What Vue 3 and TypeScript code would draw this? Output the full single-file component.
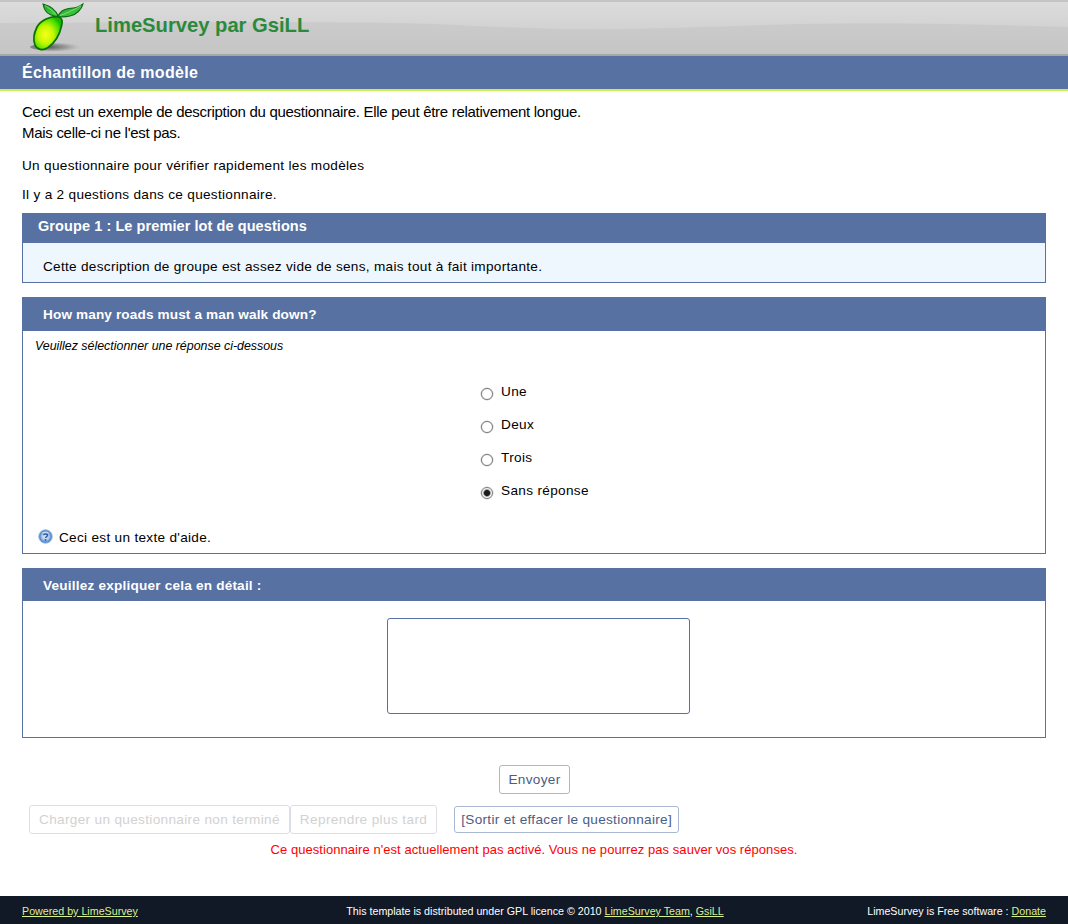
<script setup lang="ts">
const answers: { label: string; checked: boolean }[] = [
  { label: 'Une', checked: false },
  { label: 'Deux', checked: false },
  { label: 'Trois', checked: false },
  { label: 'Sans réponse', checked: true },
]
</script>

<template>
  <div class="page">
    <header class="top">
      <svg class="wave" width="1068" height="52" viewBox="0 0 1068 52" preserveAspectRatio="none">
        <defs>
          <linearGradient id="band" x1="0" y1="0" x2="0" y2="1">
            <stop offset="0" stop-color="#dcdcdc" />
            <stop offset="1" stop-color="#d2d2d2" />
          </linearGradient>
        </defs>
        <path d="M0 0H1068V25C1000 23 900 20 800 22C720 24 650 28 570 27C500 26 450 22 400 21C300 20 150 20 0 21Z" fill="url(#band)" />
      </svg>
      <svg class="logo" width="60" height="54" viewBox="0 0 60 54">
        <defs>
          <radialGradient id="fruit" cx="0.42" cy="0.55" r="0.6">
            <stop offset="0" stop-color="#f8ff1c" />
            <stop offset="0.45" stop-color="#c4f800" />
            <stop offset="0.85" stop-color="#44dc00" />
            <stop offset="1" stop-color="#1cb800" />
          </radialGradient>
          <radialGradient id="shadow" cx="0.3" cy="0.5" r="0.68">
            <stop offset="0" stop-color="#4a4a4a" />
            <stop offset="0.6" stop-color="#8a8a8a" stop-opacity="0.7" />
            <stop offset="1" stop-color="#aaa" stop-opacity="0" />
          </radialGradient>
          <linearGradient id="leaf" x1="0" y1="0" x2="1" y2="1">
            <stop offset="0" stop-color="#18a520" />
            <stop offset="1" stop-color="#4fd048" />
          </linearGradient>
          <radialGradient id="hb" cx="0.5" cy="0.5" r="0.5">
            <stop offset="0" stop-color="#eef4fc" />
            <stop offset="0.55" stop-color="#a9c4ea" />
            <stop offset="0.85" stop-color="#4f86cf" />
            <stop offset="1" stop-color="#6f9ed8" />
          </radialGradient>
        </defs>
        <ellipse cx="30" cy="47" rx="26" ry="4" fill="url(#shadow)" />
        <path d="M33 17C36 18 36.5 22 35.5 26C34 33 30 42 22 47.5C17 51 11 50 9 45C7 40 8 33 11 27C14 21 25 15 33 17Z" fill="url(#fruit)" stroke="#067000" stroke-width="1.7" />
        <path d="M32 16C30 10 24 6 17 4C18 9 20 13 24 14.5C27 16 30 16.5 32 16Z" fill="url(#leaf)" stroke="#0a6a12" stroke-width="1.1" />
        <path d="M32 16.5C34 10 42 8 47 8C50 8 54 6 57 4C56 9 50 15 44 16C39 17 35 17 32 16.5Z" fill="url(#leaf)" stroke="#0a6a12" stroke-width="1.1" />
        <path d="M34 15.5C41 13 48 10 55 5.5M30 14.5C27 11 23 8 19 5.5" fill="none" stroke="#a8eb98" stroke-width="0.7" />
      </svg>
      <span class="brand">LimeSurvey par GsiLL</span>
    </header>

    <h1 class="survey-title">Échantillon de modèle</h1>

    <main class="content">
      <p class="lead">Ceci est un exemple de description du questionnaire. Elle peut être relativement longue.<br />Mais celle-ci ne l'est pas.</p>
      <p class="welcome">Un questionnaire pour vérifier rapidement les modèles</p>
      <p class="count">Il y a 2 questions dans ce questionnaire.</p>

      <section class="group">
        <h2 class="group-title">Groupe 1 : Le premier lot de questions</h2>
        <p class="group-desc">Cette description de groupe est assez vide de sens, mais tout à fait importante.</p>
      </section>

      <section class="question q1">
        <h3 class="q-title q-title-1">How many roads must a man walk down?</h3>
        <p class="hint">Veuillez sélectionner une réponse ci-dessous</p>
        <ul class="answers">
          <li v-for="a in answers" :key="a.label" class="answer">
            <input type="radio" name="q1" :checked="a.checked" />
            <label>{{ a.label }}</label>
          </li>
        </ul>
        <p class="help">
          <svg width="15" height="15" viewBox="0 0 15 15">
            <circle cx="7.5" cy="7.5" r="6.8" fill="url(#hb)" stroke="#8fb2de" stroke-width="0.8" />
            <path d="M3.2 4.6C4.6 2.2 10.4 2.2 11.8 4.6C9.8 3.6 5.2 3.6 3.2 4.6Z" fill="#fff" fill-opacity="0.6" />
            <path d="M5.5 6.2C5.7 4.5 9.5 4.4 9.5 6.3C9.5 7.7 7.5 7.6 7.5 9.1" fill="none" stroke="#2f5c9c" stroke-width="1.5" />
            <circle cx="7.5" cy="11" r="0.95" fill="#2f5c9c" />
          </svg>
          <span>Ceci est un texte d'aide.</span>
        </p>
      </section>

      <section class="question q2">
        <h3 class="q-title q-title-2">Veuillez expliquer cela en détail :</h3>
        <div class="area-wrap"><textarea class="area"></textarea></div>
      </section>

      <div class="submit-row"><button class="btn send">Envoyer</button></div>
      <div class="actions">
        <button class="btn off" disabled>Charger un questionnaire non terminé</button>
        <button class="btn off later" disabled>Reprendre plus tard</button>
        <button class="btn clear">[Sortir et effacer le questionnaire]</button>
      </div>
      <p class="warning">Ce questionnaire n'est actuellement pas activé. Vous ne pourrez pas sauver vos réponses.</p>
    </main>

    <footer class="foot">
      <div class="foot-left"><a href="#">Powered by LimeSurvey</a></div>
      <div class="foot-mid">This template is distributed under GPL licence © 2010 <a href="#">LimeSurvey Team</a>, <a href="#">GsiLL</a></div>
      <div class="foot-right">LimeSurvey is Free software : <a href="#">Donate</a></div>
    </footer>
  </div>
</template>

<style>
body { margin: 0; background: #fff; }
</style>

<style scoped>
.page {
  width: 1068px;
  height: 924px;
  display: flex;
  flex-direction: column;
  font-family: "Liberation Sans", Arial, sans-serif;
  color: #000;
  overflow: hidden;
}
.top {
  position: relative;
  box-sizing: border-box;
  height: 56px;
  border-top: 2px solid #c4c4c4;
  border-bottom: 2px solid #a6a6a6;
  background: linear-gradient(180deg, #cfcfcf, #c5c5c5);
  display: flex;
  align-items: center;
  padding-left: 26px;
}
.wave { position: absolute; left: 0; top: 0; }
.logo { position: relative; flex: none; margin-top: -2px; }
.brand {
  position: relative;
  margin-left: 9px;
  margin-top: -5px;
  font-size: 20.2px;
  font-weight: 700;
  color: #2b8a3a;
}
.survey-title {
  margin: 0;
  box-sizing: border-box;
  height: 35px;
  background: #5671a2;
  border-bottom: 2px solid #c8f050;
  color: #fff;
  font-size: 16px;
  font-weight: 700;
  line-height: 33px;
  padding-left: 22px;
  letter-spacing: 0.3px;
}
.content {
  flex: 1;
  padding: 0 22px;
  display: flex;
  flex-direction: column;
}
.lead {
  margin: 10px 0 0;
  font-size: 15px;
  line-height: 21px;
  letter-spacing: -0.29px;
}
.welcome, .count {
  margin: 0;
  font-size: 13.6px;
  line-height: 16px;
  letter-spacing: 0.3px;
}
.welcome { margin-top: 15px; }
.count { margin-top: 13px; }
.group {
  margin-top: 10px;
  box-sizing: border-box;
  height: 70px;
  border: 1px solid #5671a2;
  background: #eef6fe;
}
.group-title {
  margin: 0;
  height: 29px;
  background: #5671a2;
  color: #fff;
  font-size: 14.5px;
  font-weight: 700;
  line-height: 24px;
  padding-left: 15px;
  letter-spacing: 0.08px;
}
.group-desc {
  margin: 16px 0 0 20px;
  font-size: 13.6px;
  line-height: 16px;
  letter-spacing: 0.29px;
}
.question {
  box-sizing: border-box;
  border: 1px solid #5671a2;
  margin-top: 14px;
  display: flex;
  flex-direction: column;
}
.q1 { height: 257px; }
.q2 { height: 170px; }
.q-title {
  margin: 0;
  background: #5671a2;
  color: #fff;
  font-size: 13.6px;
  font-weight: 700;
  padding-left: 20px;
}
.q-title-1 { height: 33px; line-height: 33px; letter-spacing: 0.13px; }
.q-title-2 { height: 32px; line-height: 34px; letter-spacing: 0.2px; }
.hint {
  margin: 7px 0 0 12px;
  font-size: 12.4px;
  line-height: 16px;
  font-style: italic;
}
.answers {
  list-style: none;
  margin: 27px 0 0 458px;
  padding: 0;
}
.answer {
  height: 33px;
  display: flex;
  align-items: flex-start;
  font-size: 13.6px;
  letter-spacing: 0.33px;
}
.answer input {
  appearance: none;
  box-sizing: border-box;
  width: 12px;
  height: 12px;
  margin: 7px 8px 0 0;
  border: 1px solid #7b7b7b;
  border-radius: 50%;
  background: #fff;
  box-shadow: 0 0 0 0.5px #c8c8c8;
}
.answer input:checked {
  background: radial-gradient(circle, #1c1c1c 0, #1c1c1c 2.6px, #8a8a8a 3.3px, #f8f8f8 4.2px);
}
.answer label { line-height: 18px; margin-top: 2px; }
.help {
  margin: auto 0 7px 16px;
  display: flex;
  align-items: center;
  gap: 6px;
  font-size: 13.6px;
  line-height: 16px;
  letter-spacing: 0.3px;
}
.help svg { margin-top: -3px; margin-left: -1px; }
.area-wrap {
  display: flex;
  justify-content: center;
  padding: 17px 0 0 9px;
}
.area {
  box-sizing: border-box;
  width: 303px;
  height: 96px;
  border: 1px solid #5671a2;
  border-radius: 3px;
  background: #fff;
  margin: 0;
  padding: 2px;
  resize: none;
  outline: none;
}
.btn {
  box-sizing: border-box;
  height: 29px;
  background: #fff;
  border: 1px solid #a9b7d2;
  border-radius: 3px;
  color: #4b5c85;
  font-family: "Liberation Sans", Arial, sans-serif;
  font-size: 13.6px;
  letter-spacing: 0.33px;
  padding: 0 9px;
  margin: 0;
}
.btn.send { padding: 0 8px; }
.submit-row {
  display: flex;
  justify-content: center;
  margin-top: 27px;
  padding-left: 1px;
}
.actions {
  display: flex;
  align-items: center;
  margin-top: 11px;
  padding-left: 7px;
}
.btn.off {
  border-color: #dcdfe6;
  color: #d2d2d2;
}
.btn.later { letter-spacing: 0.38px; }
.btn.clear {
  height: 27px;
  margin-left: 17px;
  padding: 0 6px;
  letter-spacing: 0.3px;
}
.warning {
  margin: 8px 0 0;
  text-align: center;
  color: #f00;
  font-size: 13px;
  line-height: 16px;
  letter-spacing: 0.055px;
}
.foot {
  box-sizing: border-box;
  height: 28px;
  background: #111927;
  color: #fff;
  display: flex;
  align-items: center;
  justify-content: space-between;
  padding: 2px 22px 0;
  font-size: 10.7px;
}
.foot a { color: #d9f08f; text-decoration: underline; }
.foot-mid { margin-left: 65px; }
</style>
